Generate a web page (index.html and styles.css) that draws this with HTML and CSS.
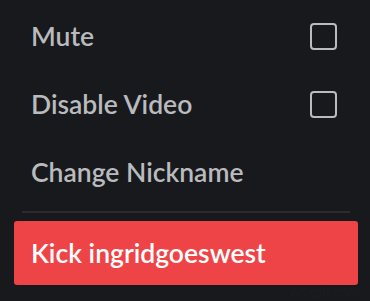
FILE: index.html
```html
<!DOCTYPE html>
<html>
<head>
<meta charset="utf-8">
<link rel="stylesheet" href="styles.css">
</head>
<body>
<div class="menu">
  <div class="item">
    <span class="label">Mute</span>
    <span class="checkbox"></span>
  </div>
  <div class="item">
    <span class="label">Disable Video</span>
    <span class="checkbox"></span>
  </div>
  <div class="item">
    <span class="label">Change Nickname</span>
  </div>
  <div class="separator"></div>
  <div class="item danger">
    <span class="label">Kick ingridgoeswest</span>
  </div>
</div>
<div class="watermark">wsxdn.com</div>
</body>
</html>
```
FILE: styles.css
```css
html, body {
  margin: 0;
  padding: 0;
  background: #18191c;
}
body {
  position: relative;
  width: 370px;
  height: 301px;
  overflow: hidden;
  font-family: "Lato", "Open Sans", sans-serif;
}
.menu {
  display: flex;
  flex-direction: column;
  padding: 2px 12px 0 14px;
}
.item {
  display: flex;
  align-items: center;
  justify-content: space-between;
  height: 68px;
  padding: 0 21px 0 17px;
  color: #b9bbbe;
  font-size: 26.5px;
  font-weight: 600;
  border-radius: 3px;
}
.label {
  line-height: 1;
}
.checkbox {
  box-sizing: border-box;
  width: 27px;
  height: 27px;
  border: 2.5px solid #b9bbbe;
  border-radius: 4px;
}
.separator {
  height: 2px;
  background: #2a2b2f;
  margin: 5px 8px 8px 8px;
}
.danger {
  height: 64px;
  background: #ef4447;
  color: #ffffff;
}
.watermark {
  position: absolute;
  right: 10px;
  bottom: 2px;
  font-family: "Liberation Sans", sans-serif;
  font-size: 14px;
  line-height: 14px;
  color: #1c1c1e;
}
```
